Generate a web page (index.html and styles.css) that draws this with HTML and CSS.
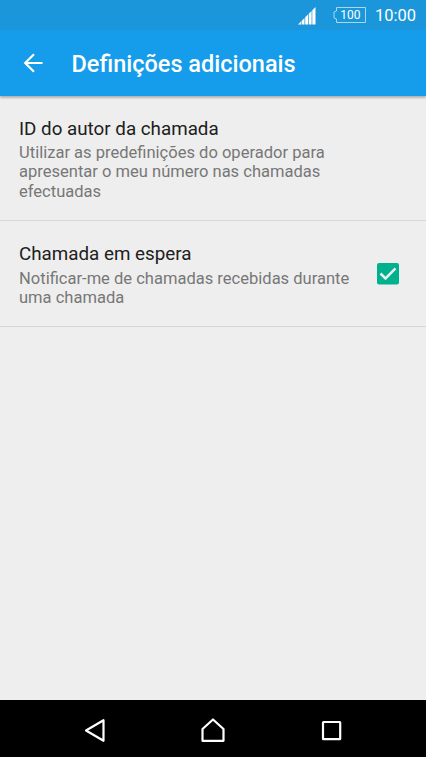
FILE: index.html
```html
<!DOCTYPE html>
<html lang="pt">
<head>
    <meta charset="UTF-8">
    <meta name="viewport" content="width=device-width, initial-scale=1.0">
    <title>Definições adicionais</title>
    <link rel="stylesheet" href="styles.css">
</head>
<body>
    <div class="screen">
        <div class="status-bar">
            <svg class="signal" viewBox="0 0 18 18">
                <path d="M0 17.500L3 14.500v3zM3.600 13.900L6.500 11v6.500H3.600zM7.200 10.300L10 7.500v10H7.200zM10.700 6.800l2.900-2.900v13.600h-2.900zM14.300 3.200L17.500 0v17.500h-3.200z"/>
            </svg>
            <div class="battery">
                <svg viewBox="0 0 33 16">
                    <path d="M3.500.5h29v15h-29V12L1 11V5l2.500-1z"/>
                </svg>
                <span class="battery-level">100</span>
            </div>
            <span class="clock">10:00</span>
        </div>

        <header class="app-bar">
            <svg class="back-arrow" viewBox="0 0 20 20">
                <path d="M19.500 10H2M11 1.200L2.200 10l8.800 8.800"/>
            </svg>
            <h1>Definições adicionais</h1>
        </header>

        <main class="settings">
            <div class="setting setting-caller">
                <div class="setting-text">
                    <h2>ID do autor da chamada</h2>
                    <p>Utilizar as predefinições do operador para apresentar o meu número nas chamadas efectuadas</p>
                </div>
            </div>
            <div class="setting setting-waiting">
                <div class="setting-text">
                    <h2>Chamada em espera</h2>
                    <p>Notificar-me de chamadas recebidas durante uma chamada</p>
                </div>
                <svg class="checkbox" viewBox="0 0 22 22">
                    <rect width="22" height="21.500" rx="2"/>
                    <path d="M3.500 10.500l5 5L18.500 5.300"/>
                </svg>
            </div>
        </main>

        <nav class="nav-bar">
            <svg viewBox="0 0 26 26">
                <path d="M22.500 3.200v20.600L5 13.500z"/>
            </svg>
            <svg viewBox="0 0 26 26">
                <path d="M2.500 12L13 2.500 23.500 12v11.800h-21z"/>
            </svg>
            <svg viewBox="0 0 26 26">
                <rect x="5" y="5" width="17.200" height="17.200" rx=".5"/>
            </svg>
        </nav>
    </div>
</body>
</html>
```

FILE: styles.css
```css
* {
    margin: 0;
    padding: 0;
    box-sizing: border-box;
}

body {
    font-family: Roboto, 'Noto Sans', sans-serif;
    background: #eee;
}

.screen {
    display: flex;
    flex-direction: column;
    height: 757px;
    max-width: 426px;
    overflow: hidden;
}

.status-bar {
    display: flex;
    align-items: center;
    justify-content: flex-end;
    height: 30px;
    padding: 0 10px 1px 0;
    background: #1b96db;
    color: white;
}

.signal {
    width: 18px;
    height: 18px;
    margin: 2px 17px 0 0;
    fill: white;
}

.battery {
    display: grid;
    width: 33px;
    height: 16px;
    margin-right: 9px;
}

.battery svg,
.battery-level {
    grid-area: 1 / 1;
}

.battery svg {
    width: 33px;
    height: 16px;
    fill: none;
    stroke: #a9d7f2;
}

.battery-level {
    padding-left: 2px;
    font-size: 12px;
    line-height: 16px;
    text-align: center;
}

.clock {
    padding-top: 2px;
    font-size: 16.5px;
    line-height: 20px;
}

.app-bar {
    display: flex;
    align-items: center;
    height: 66px;
    padding: 0 23px;
    background: #159ceb;
    color: white;
    box-shadow: 0 2px 2px rgba(0, 0, 0, 0.25);
    z-index: 1;
}

.back-arrow {
    width: 20px;
    height: 20px;
    margin-right: 28.5px;
    fill: none;
    stroke: white;
    stroke-width: 2.2;
}

h1 {
    padding-top: 1px;
    font-size: 23.5px;
    font-weight: 500;
    line-height: 30px;
    white-space: nowrap;
}

.settings {
    flex: 1;
}

.setting {
    display: flex;
    justify-content: space-between;
    padding: 21px 27px 0 19px;
    border-bottom: 1px solid #d6d6d6;
}

.setting-caller {
    height: 125px;
}

.setting-waiting {
    height: 106px;
}

.setting-text {
    width: 340px;
}

h2 {
    margin-bottom: 1px;
    color: #202020;
    font-size: 18.8px;
    font-weight: 400;
    line-height: 25px;
}

.setting-waiting h2 {
    margin-bottom: 2px;
}

p {
    color: #777;
    font-size: 16.55px;
    line-height: 19.4px;
}

.checkbox {
    width: 22px;
    height: 22px;
    margin-top: 21px;
    fill: #00b18e;
}

.checkbox path {
    fill: none;
    stroke: #ededed;
    stroke-width: 2.5;
}

.nav-bar {
    display: flex;
    align-items: center;
    justify-content: space-between;
    height: 57px;
    padding: 3px 82px 0 81px;
    background: black;
}

.nav-bar svg {
    width: 26px;
    height: 26px;
    fill: none;
    stroke: white;
    stroke-width: 2.2;
    stroke-linejoin: round;
}
```
